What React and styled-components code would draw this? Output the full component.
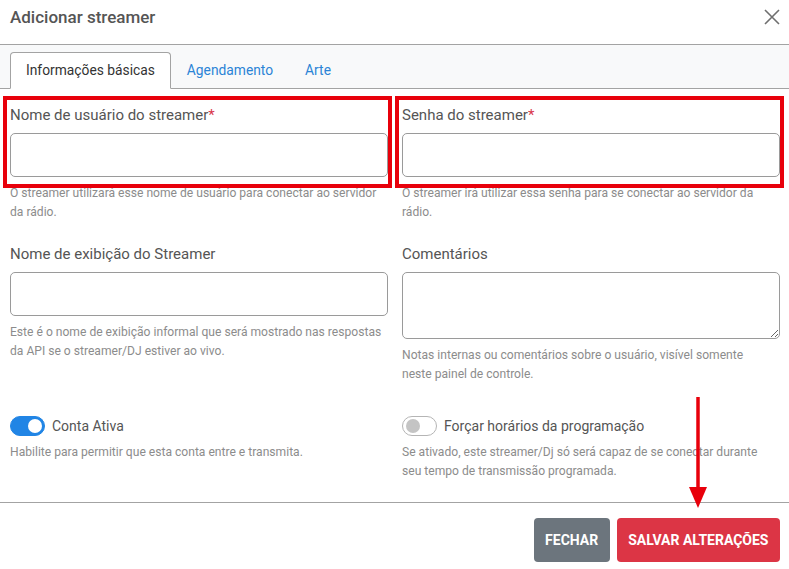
import React, {useState} from 'react'
import styled, {createGlobalStyle, css} from "styled-components";

const GlobalStyle = createGlobalStyle`
html, body {
    margin: 0;
    background: #fff;
}
body {
    font-family: Roboto, "Noto Sans", Arial, sans-serif;
    color: #555;
}
* {
    box-sizing: border-box;
}
`;

const Modal = () => {
    const [tab, setTab] = useState('basic')
    const [active, setActive] = useState(true)
    const [enforce, setEnforce] = useState(false)

    return (
        <Dialog>
            <GlobalStyle />
            <Header>
                <Title>Adicionar streamer</Title>
                <Close aria-label="Fechar">
                    <svg width="16" height="16" viewBox="0 0 16 16">
                        <path d="M1 1 L15 15 M15 1 L1 15" stroke="#6f6f6f" strokeWidth="1.6" fill="none" />
                    </svg>
                </Close>
            </Header>

            <Tabs>
                <Tab active={tab === 'basic'} onClick={() => setTab('basic')}>Informações básicas</Tab>
                <Tab active={tab === 'schedule'} onClick={() => setTab('schedule')}>Agendamento</Tab>
                <Tab active={tab === 'art'} onClick={() => setTab('art')}>Arte</Tab>
            </Tabs>

            <Body>
                <Field>
                    <FieldHead highlighted>
                        <Label>Nome de usuário do streamer<Required>*</Required></Label>
                        <Input type="text" />
                    </FieldHead>
                    <Help>O streamer utilizará esse nome de usuário para conectar ao servidor da rádio.</Help>
                </Field>
                <Field>
                    <FieldHead highlighted>
                        <Label>Senha do streamer<Required>*</Required></Label>
                        <Input type="password" />
                    </FieldHead>
                    <Help>O streamer irá utilizar essa senha para se conectar ao servidor da rádio.</Help>
                </Field>

                <Field>
                    <FieldHead>
                        <Label>Nome de exibição do Streamer</Label>
                        <Input type="text" />
                    </FieldHead>
                    <Help>Este é o nome de exibição informal que será mostrado nas respostas da API se o streamer/DJ estiver ao vivo.</Help>
                </Field>
                <Field>
                    <FieldHead>
                        <Label>Comentários</Label>
                        <TextArea />
                    </FieldHead>
                    <Help>Notas internas ou comentários sobre o usuário, visível somente<br />neste painel de controle.</Help>
                </Field>

                <Field toggle>
                    <SwitchRow onClick={() => setActive(!active)}>
                        <Switch on={active} />
                        Conta Ativa
                    </SwitchRow>
                    <Help>Habilite para permitir que esta conta entre e transmita.</Help>
                </Field>
                <Field toggle>
                    <SwitchRow onClick={() => setEnforce(!enforce)}>
                        <Switch on={enforce} />
                        Forçar horários da programação
                    </SwitchRow>
                    <Help>Se ativado, este streamer/Dj só será capaz de se conectar durante<br />seu tempo de transmissão programada.</Help>
                </Field>
            </Body>

            <Footer>
                <Button variant="secondary">Fechar</Button>
                <Button variant="danger">Salvar alterações</Button>
            </Footer>

            {/* seta vermelha apontando para o botão de salvar */}
            <Arrow width="18" height="111" viewBox="0 0 18 111">
                <path d="M9 0 V92" stroke="#e8000b" strokeWidth="3.5" />
                <polygon points="0,90 18,90 9,111" fill="#e8000b" />
            </Arrow>
        </Dialog>
    )
}

const Dialog = styled.div`
position: relative;
width: 789px;
height: 569px;
background: #fff;
overflow: hidden;
`;

const Header = styled.div`
display: flex;
justify-content: space-between;
align-items: flex-start;
height: 45px;
padding: 7px 9px 0 10px;
border-bottom: 1px solid #a3a3a3;
`;

const Title = styled.h5`
margin: 0;
font-size: 17px;
font-weight: 500;
line-height: 20px;
color: #555;
`;

const Close = styled.button`
border: 0;
background: none;
padding: 0;
margin-top: 2px;
width: 16px;
height: 16px;
display: flex;
cursor: pointer;
`;

const Tabs = styled.div`
display: flex;
align-items: flex-end;
height: 44px;
padding-left: 10px;
background: #f8f9fa;
border-bottom: 1px solid #a3a3a3;
`;

const Tab = styled.button`
height: 37px;
margin-bottom: -1px;
padding: 0 15px 1px;
font-family: inherit;
font-size: 13.8px;
border: 1px solid transparent;
border-radius: 4px 4px 0 0;
background: none;
color: #2b84d6;
cursor: pointer;

${p => p.active && css`
    background: #fff;
    color: #333;
    border-color: #a3a3a3 #a3a3a3 #fff;
`}
`;

const Body = styled.div`
display: grid;
grid-template-columns: minmax(0, 1fr) minmax(0, 1fr);
column-gap: 14px;
row-gap: 23px;
padding: 17px 9px 21px 10px;
border-bottom: 1px solid #a3a3a3;
`;

const Field = styled.div`
${p => p.toggle && css`
    padding-top: 8px;
`}
`;

const FieldHead = styled.div`
position: relative;

${p => p.highlighted && css`
    &::after {
        content: "";
        position: absolute;
        top: -10px;
        bottom: -11px;
        left: -7px;
        right: -4px;
        border: 4px solid #e8000b;
        pointer-events: none;
    }
`}
`;

const Label = styled.label`
display: block;
font-size: 15px;
line-height: 18px;
margin-bottom: 9px;
color: #555;
`;

const Required = styled.span`
color: #d9364c;
`;

const Input = styled.input`
display: block;
width: 100%;
height: 44px;
border: 1px solid #9a9a9a;
border-radius: 5px;
padding: 0 12px;
font-family: inherit;
font-size: 15px;
color: #333;
outline: none;
`;

const TextArea = styled.textarea`
display: block;
width: 100%;
height: 67px;
border: 1px solid #9a9a9a;
border-radius: 5px;
padding: 8px 12px;
font-family: inherit;
font-size: 15px;
color: #333;
outline: none;
resize: vertical;
`;

const Help = styled.div`
margin-top: 7px;
font-size: 12.1px;
line-height: 19px;
color: #8c8c8c;
`;

const SwitchRow = styled.div`
display: flex;
align-items: center;
gap: 7px;
height: 21px;
font-size: 14px;
color: #555;
cursor: pointer;
`;

const Switch = styled.span`
position: relative;
flex: none;
width: 35px;
height: 20px;
border-radius: 10px;
border: 1px solid ${p => (p.on ? '#2185e5' : '#b5b5b5')};
background: ${p => (p.on ? '#2185e5' : '#fff')};

&::after {
    content: "";
    position: absolute;
    top: 2px;
    left: ${p => (p.on ? '17px' : '3px')};
    width: 14px;
    height: 14px;
    border-radius: 50%;
    background: ${p => (p.on ? '#fff' : '#c4c4c4')};
}
`;

const Footer = styled.div`
display: flex;
justify-content: flex-end;
gap: 7px;
padding: 15px 9px 9px;
`;

const Button = styled.button`
height: 44px;
padding: 0 11.5px;
border: 0;
border-radius: 4px;
font-family: inherit;
font-size: 14px;
font-weight: 700;
text-transform: uppercase;
color: #fff;
cursor: pointer;
background: ${p => (p.variant === 'danger' ? '#dc3545' : '#6c757d')};
`;

const Arrow = styled.svg`
position: absolute;
left: 689px;
top: 397px;
pointer-events: none;
`;

export default Modal
